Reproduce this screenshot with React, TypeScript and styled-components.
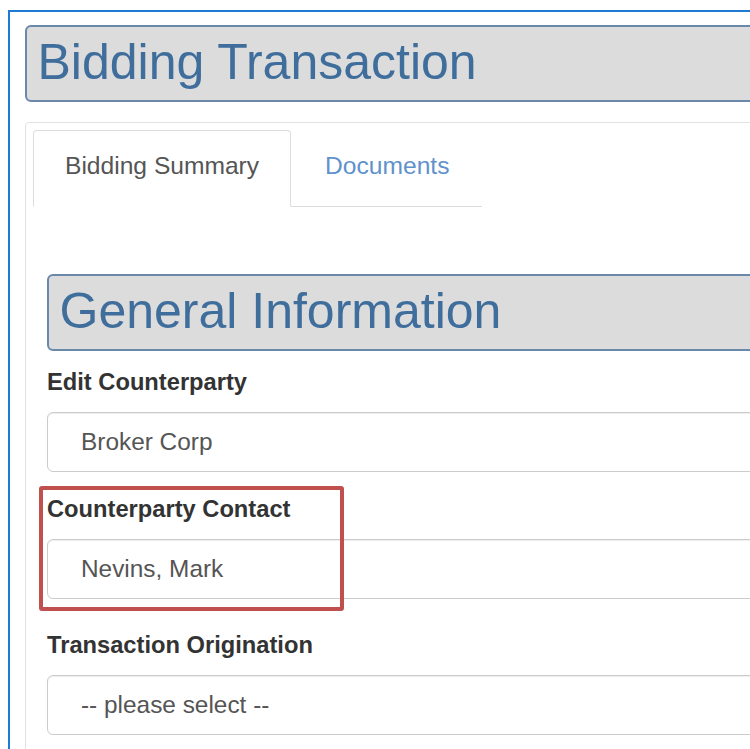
import React from "react";
import styled, { createGlobalStyle } from "styled-components";

const GlobalStyle = createGlobalStyle`
  html, body {
    margin: 0;
    padding: 0;
    background: #fff;
    overflow: hidden;
  }
  body {
    font-family: "Liberation Sans", Arial, Helvetica, sans-serif;
  }
  *, *::before, *::after {
    box-sizing: border-box;
  }
`;

const Frame = styled.div`
  margin: 10px 0 0 8px;
  width: 900px;
  min-height: 900px;
  border: 2px solid #1e7bd4;
  padding: 13px 0 0 15px;
`;

const HeadingBar = styled.h1`
  margin: 0;
  height: 77px;
  padding: 7px 10.5px 9px;
  border: 2px solid #6a88aa;
  border-radius: 6px;
  background: #dcdcdc;
  color: #3f6e9c;
  font-size: 50px;
  font-weight: normal;
  line-height: 57px;
  white-space: nowrap;
  overflow: hidden;
`;

const Panel = styled.div`
  margin-top: 20px;
  border: 1px solid #e2e2e2;
  border-radius: 4px;
  padding: 7px;
  min-height: 800px;
`;

const TabList = styled.ul`
  display: flex;
  width: fit-content;
  margin: 0;
  padding: 0;
  list-style: none;
  border-bottom: 1px solid #ddd;
`;

const Tab = styled.li<{ $active?: boolean }>`
  margin: 0 2px -1px 0;
  padding: 21px 31px 26px;
  border: 1px solid ${(p) => (p.$active ? "#ddd" : "transparent")};
  border-bottom-color: ${(p) => (p.$active ? "#fff" : "transparent")};
  border-radius: 4px 4px 0 0;
  background: ${(p) => (p.$active ? "#fff" : "transparent")};
  color: ${(p) => (p.$active ? "#555" : "#5f92cc")};
  font-size: 24.6px;
  line-height: 28px;
  white-space: nowrap;
  cursor: pointer;

  &:last-child {
    margin-right: 0;
  }
`;

const TabContent = styled.div`
  padding: 67px 0 0 14px;
`;

const FieldGroup = styled.div<{ $gap: number }>`
  position: relative;
  margin-top: ${(p) => p.$gap}px;
`;

const FieldLabel = styled.label`
  display: block;
  margin-bottom: 13px;
  color: #333;
  font-size: 23.7px;
  font-weight: bold;
  line-height: 34px;
  white-space: nowrap;
`;

const FieldBox = styled.div`
  display: flex;
  align-items: center;
  height: 60px;
  padding: 0 33px;
  border: 1px solid #ccc;
  border-radius: 6px;
  background: #fff;
  box-shadow: inset 0 1px 1px rgba(0, 0, 0, 0.075);
  color: #555;
  font-size: 24.4px;
  white-space: nowrap;
`;

const Highlight = styled.div`
  position: absolute;
  top: -6.5px;
  left: -8px;
  width: 305px;
  bottom: -11.5px;
  border: 4px solid #c0504d;
  border-radius: 3px;
  pointer-events: none;
`;

type Field = {
  label: string;
  value: string;
  gap: number;
  marked?: boolean;
};

const fields: Field[] = [
  { label: "Edit Counterparty", value: "Broker Corp", gap: 14 },
  { label: "Counterparty Contact", value: "Nevins, Mark", gap: 20, marked: true },
  { label: "Transaction Origination", value: "-- please select --", gap: 29 },
];

export default function App() {
  return (
    <>
      <GlobalStyle />
      <Frame>
        <HeadingBar>Bidding Transaction</HeadingBar>
        <Panel>
          <TabList>
            <Tab $active>Bidding Summary</Tab>
            <Tab>Documents</Tab>
          </TabList>
          <TabContent>
            <HeadingBar as="h2">General Information</HeadingBar>
            {fields.map((f) => (
              <FieldGroup key={f.label} $gap={f.gap}>
                <FieldLabel>{f.label}</FieldLabel>
                <FieldBox>{f.value}</FieldBox>
                {f.marked && <Highlight />}
              </FieldGroup>
            ))}
          </TabContent>
        </Panel>
      </Frame>
    </>
  );
}
